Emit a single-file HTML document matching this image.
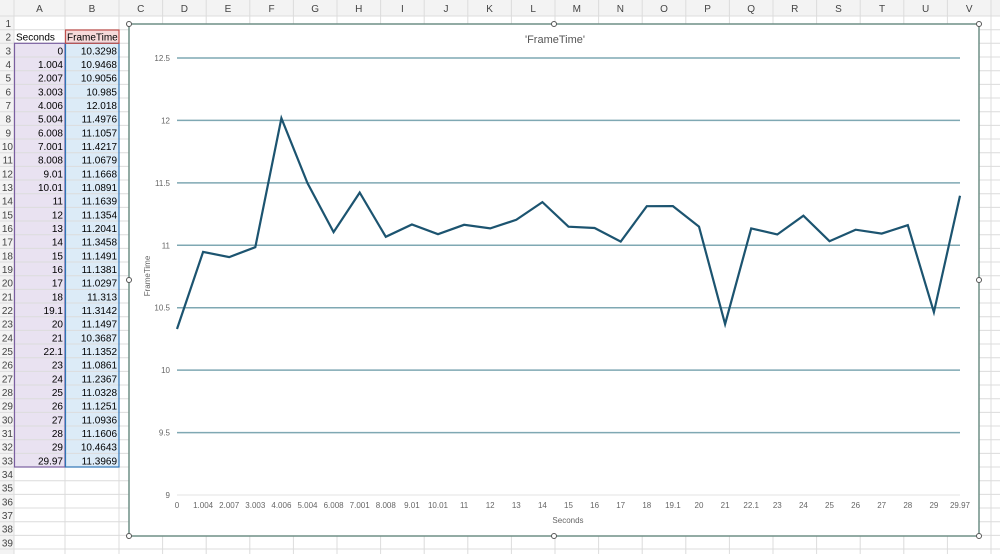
<!DOCTYPE html>
<html><head><meta charset="utf-8"><style>
body{margin:0;width:1000px;height:554px;overflow:hidden;background:#fff}
svg{display:block;font-family:"Liberation Sans",sans-serif}
</style></head><body>
<svg width="1000" height="554" viewBox="0 0 1000 554" xmlns="http://www.w3.org/2000/svg">
<rect width="1000" height="554" fill="#fff"/>
<!-- header bg -->
<rect x="0" y="0" width="1000" height="16" fill="#f3f3f3"/>
<rect x="0" y="0" width="14" height="554" fill="#f3f3f3"/>
<!-- selection fills -->
<rect x="14" y="43.3" width="51" height="423.8" fill="#e9e2f1"/>
<rect x="65" y="43.3" width="54" height="423.8" fill="#dcebf7"/>
<rect x="65" y="29.7" width="54" height="13.6" fill="#f6dada"/>
<g id="grid" stroke="#e1e1e1" stroke-width="1">
<script></script>
</g>
<g stroke="#e1e1e1" stroke-width="1" id="g2"></g>
<g stroke="#dcdcdc" stroke-width="1">
<line x1="14" y1="0" x2="14" y2="554"/><line x1="65" y1="0" x2="65" y2="554"/><line x1="119" y1="0" x2="119" y2="554"/>
<line x1="162.6" y1="0" x2="162.6" y2="554"/><line x1="206.2" y1="0" x2="206.2" y2="554"/><line x1="249.8" y1="0" x2="249.8" y2="554"/><line x1="293.4" y1="0" x2="293.4" y2="554"/><line x1="337" y1="0" x2="337" y2="554"/><line x1="380.6" y1="0" x2="380.6" y2="554"/><line x1="424.2" y1="0" x2="424.2" y2="554"/><line x1="467.8" y1="0" x2="467.8" y2="554"/><line x1="511.4" y1="0" x2="511.4" y2="554"/><line x1="555" y1="0" x2="555" y2="554"/><line x1="598.6" y1="0" x2="598.6" y2="554"/><line x1="642.2" y1="0" x2="642.2" y2="554"/><line x1="685.8" y1="0" x2="685.8" y2="554"/><line x1="729.4" y1="0" x2="729.4" y2="554"/><line x1="773" y1="0" x2="773" y2="554"/><line x1="816.6" y1="0" x2="816.6" y2="554"/><line x1="860.2" y1="0" x2="860.2" y2="554"/><line x1="903.8" y1="0" x2="903.8" y2="554"/><line x1="947.4" y1="0" x2="947.4" y2="554"/><line x1="991" y1="0" x2="991" y2="554"/>
<line x1="0" y1="16" x2="1000" y2="16"/><line x1="0" y1="29.7" x2="1000" y2="29.7"/><line x1="0" y1="43.3" x2="1000" y2="43.3"/><line x1="0" y1="57" x2="1000" y2="57"/><line x1="0" y1="70.7" x2="1000" y2="70.7"/><line x1="0" y1="84.4" x2="1000" y2="84.4"/><line x1="0" y1="98" x2="1000" y2="98"/><line x1="0" y1="111.7" x2="1000" y2="111.7"/><line x1="0" y1="125.4" x2="1000" y2="125.4"/><line x1="0" y1="139" x2="1000" y2="139"/><line x1="0" y1="152.7" x2="1000" y2="152.7"/><line x1="0" y1="166.4" x2="1000" y2="166.4"/><line x1="0" y1="180" x2="1000" y2="180"/><line x1="0" y1="193.7" x2="1000" y2="193.7"/><line x1="0" y1="207.4" x2="1000" y2="207.4"/><line x1="0" y1="221" x2="1000" y2="221"/><line x1="0" y1="234.7" x2="1000" y2="234.7"/><line x1="0" y1="248.4" x2="1000" y2="248.4"/><line x1="0" y1="262" x2="1000" y2="262"/><line x1="0" y1="275.7" x2="1000" y2="275.7"/><line x1="0" y1="289.4" x2="1000" y2="289.4"/><line x1="0" y1="303" x2="1000" y2="303"/><line x1="0" y1="316.7" x2="1000" y2="316.7"/><line x1="0" y1="330.4" x2="1000" y2="330.4"/><line x1="0" y1="344" x2="1000" y2="344"/><line x1="0" y1="357.7" x2="1000" y2="357.7"/><line x1="0" y1="371.4" x2="1000" y2="371.4"/><line x1="0" y1="385" x2="1000" y2="385"/><line x1="0" y1="398.7" x2="1000" y2="398.7"/><line x1="0" y1="412.4" x2="1000" y2="412.4"/><line x1="0" y1="426" x2="1000" y2="426"/><line x1="0" y1="439.7" x2="1000" y2="439.7"/><line x1="0" y1="453.4" x2="1000" y2="453.4"/><line x1="0" y1="467" x2="1000" y2="467"/><line x1="0" y1="480.7" x2="1000" y2="480.7"/><line x1="0" y1="494.4" x2="1000" y2="494.4"/><line x1="0" y1="508" x2="1000" y2="508"/><line x1="0" y1="521.7" x2="1000" y2="521.7"/><line x1="0" y1="535.4" x2="1000" y2="535.4"/><line x1="0" y1="549" x2="1000" y2="549"/>
</g>
<!-- column headers -->
<g font-size="10" fill="#444" text-anchor="middle">
<text x="39.5" y="12">A</text><text x="92" y="12">B</text><text x="140.8" y="12">C</text><text x="184.4" y="12">D</text><text x="228" y="12">E</text><text x="271.6" y="12">F</text><text x="315.2" y="12">G</text><text x="358.8" y="12">H</text><text x="402.4" y="12">I</text><text x="446" y="12">J</text><text x="489.6" y="12">K</text><text x="533.2" y="12">L</text><text x="576.8" y="12">M</text><text x="620.4" y="12">N</text><text x="664" y="12">O</text><text x="707.6" y="12">P</text><text x="751.2" y="12">Q</text><text x="794.8" y="12">R</text><text x="838.4" y="12">S</text><text x="882" y="12">T</text><text x="925.6" y="12">U</text><text x="969.2" y="12">V</text>
</g>
<!-- row numbers -->
<g font-size="10" fill="#444" text-anchor="end">
<text x="11" y="27">1</text><text x="11" y="40.7">2</text><text x="11" y="54.3">3</text><text x="11" y="68">4</text><text x="11" y="81.7">5</text><text x="11" y="95.4">6</text><text x="11" y="109">7</text><text x="11" y="122.7">8</text><text x="11" y="136.4">9</text><text x="13" y="150">10</text><text x="13" y="163.7">11</text><text x="13" y="177.4">12</text><text x="13" y="191">13</text><text x="13" y="204.7">14</text><text x="13" y="218.4">15</text><text x="13" y="232">16</text><text x="13" y="245.7">17</text><text x="13" y="259.4">18</text><text x="13" y="273">19</text><text x="13" y="286.7">20</text><text x="13" y="300.4">21</text><text x="13" y="314">22</text><text x="13" y="327.7">23</text><text x="13" y="341.4">24</text><text x="13" y="355">25</text><text x="13" y="368.7">26</text><text x="13" y="382.4">27</text><text x="13" y="396">28</text><text x="13" y="409.7">29</text><text x="13" y="423.4">30</text><text x="13" y="437">31</text><text x="13" y="450.7">32</text><text x="13" y="464.4">33</text><text x="13" y="478">34</text><text x="13" y="491.7">35</text><text x="13" y="505.4">36</text><text x="13" y="519">37</text><text x="13" y="532.7">38</text><text x="13" y="546.4">39</text>
</g>
<!-- selection borders -->
<rect x="14.5" y="43.3" width="50.5" height="423.7" fill="none" stroke="#7a5fa0" stroke-width="1.2"/>
<rect x="65.5" y="43.3" width="53.5" height="423.7" fill="none" stroke="#2e75b6" stroke-width="1.2"/>
<rect x="65.5" y="30" width="53.5" height="13.3" fill="none" stroke="#c0504d" stroke-width="1.2"/>
<g font-size="10" fill="#000">
<text x="16" y="40.7">Seconds</text><text x="67" y="40.7">FrameTime</text>
</g>
<g font-size="10" fill="#000" text-anchor="end">
<text x="63" y="54.3">0</text><text x="63" y="68">1.004</text><text x="63" y="81.7">2.007</text><text x="63" y="95.4">3.003</text><text x="63" y="109">4.006</text><text x="63" y="122.7">5.004</text><text x="63" y="136.4">6.008</text><text x="63" y="150">7.001</text><text x="63" y="163.7">8.008</text><text x="63" y="177.4">9.01</text><text x="63" y="191">10.01</text><text x="63" y="204.7">11</text><text x="63" y="218.4">12</text><text x="63" y="232">13</text><text x="63" y="245.7">14</text><text x="63" y="259.4">15</text><text x="63" y="273">16</text><text x="63" y="286.7">17</text><text x="63" y="300.4">18</text><text x="63" y="314">19.1</text><text x="63" y="327.7">20</text><text x="63" y="341.4">21</text><text x="63" y="355">22.1</text><text x="63" y="368.7">23</text><text x="63" y="382.4">24</text><text x="63" y="396">25</text><text x="63" y="409.7">26</text><text x="63" y="423.4">27</text><text x="63" y="437">28</text><text x="63" y="450.7">29</text><text x="63" y="464.4">29.97</text>
<text x="117" y="54.3">10.3298</text><text x="117" y="68">10.9468</text><text x="117" y="81.7">10.9056</text><text x="117" y="95.4">10.985</text><text x="117" y="109">12.018</text><text x="117" y="122.7">11.4976</text><text x="117" y="136.4">11.1057</text><text x="117" y="150">11.4217</text><text x="117" y="163.7">11.0679</text><text x="117" y="177.4">11.1668</text><text x="117" y="191">11.0891</text><text x="117" y="204.7">11.1639</text><text x="117" y="218.4">11.1354</text><text x="117" y="232">11.2041</text><text x="117" y="245.7">11.3458</text><text x="117" y="259.4">11.1491</text><text x="117" y="273">11.1381</text><text x="117" y="286.7">11.0297</text><text x="117" y="300.4">11.313</text><text x="117" y="314">11.3142</text><text x="117" y="327.7">11.1497</text><text x="117" y="341.4">10.3687</text><text x="117" y="355">11.1352</text><text x="117" y="368.7">11.0861</text><text x="117" y="382.4">11.2367</text><text x="117" y="396">11.0328</text><text x="117" y="409.7">11.1251</text><text x="117" y="423.4">11.0936</text><text x="117" y="437">11.1606</text><text x="117" y="450.7">10.4643</text><text x="117" y="464.4">11.3969</text>
</g>
<!-- chart -->
<rect x="129" y="24" width="850" height="512" fill="#fff" stroke="#6f8f86" stroke-width="1.5"/>
<g fill="#fff" stroke="#555" stroke-width="1">
<circle cx="129" cy="24" r="2.5"/><circle cx="554" cy="24" r="2.5"/><circle cx="979" cy="24" r="2.5"/><circle cx="129" cy="280" r="2.5"/><circle cx="979" cy="280" r="2.5"/><circle cx="129" cy="536" r="2.5"/><circle cx="554" cy="536" r="2.5"/><circle cx="979" cy="536" r="2.5"/>
</g>
<text x="555" y="43" font-size="11" fill="#555" text-anchor="middle">'FrameTime'</text>
<g stroke="#7fa8b3" stroke-width="1.5">
<line x1="177" y1="58" x2="960" y2="58"/><line x1="177" y1="120.4" x2="960" y2="120.4"/><line x1="177" y1="182.9" x2="960" y2="182.9"/><line x1="177" y1="245.3" x2="960" y2="245.3"/><line x1="177" y1="307.7" x2="960" y2="307.7"/><line x1="177" y1="370.1" x2="960" y2="370.1"/><line x1="177" y1="432.6" x2="960" y2="432.6"/>
</g>
<line x1="177" y1="495" x2="960" y2="495" stroke="#e3e3e3" stroke-width="1"/>
<g font-size="8" fill="#666" text-anchor="end">
<text x="170" y="61">12.5</text><text x="170" y="123.4">12</text><text x="170" y="185.9">11.5</text><text x="170" y="248.3">11</text><text x="170" y="310.7">10.5</text><text x="170" y="373.1">10</text><text x="170" y="435.6">9.5</text><text x="170" y="498">9</text>
</g>
<g font-size="8" fill="#666" text-anchor="middle">
<text x="177" y="508">0</text><text x="203.1" y="508">1.004</text><text x="229.2" y="508">2.007</text><text x="255.3" y="508">3.003</text><text x="281.4" y="508">4.006</text><text x="307.5" y="508">5.004</text><text x="333.6" y="508">6.008</text><text x="359.7" y="508">7.001</text><text x="385.8" y="508">8.008</text><text x="411.9" y="508">9.01</text><text x="438" y="508">10.01</text><text x="464.1" y="508">11</text><text x="490.2" y="508">12</text><text x="516.3" y="508">13</text><text x="542.4" y="508">14</text><text x="568.5" y="508">15</text><text x="594.6" y="508">16</text><text x="620.7" y="508">17</text><text x="646.8" y="508">18</text><text x="672.9" y="508">19.1</text><text x="699" y="508">20</text><text x="725.1" y="508">21</text><text x="751.2" y="508">22.1</text><text x="777.3" y="508">23</text><text x="803.4" y="508">24</text><text x="829.5" y="508">25</text><text x="855.6" y="508">26</text><text x="881.7" y="508">27</text><text x="907.8" y="508">28</text><text x="933.9" y="508">29</text><text x="960" y="508">29.97</text>
<text x="568" y="523">Seconds</text>
<text transform="translate(150 276) rotate(-90)">FrameTime</text>
</g>
<polyline fill="none" stroke="#1c5470" stroke-width="2.2" stroke-linejoin="miter" points="177,329 203.1,251.9 229.2,257.1 255.3,247.2 281.4,118.2 307.5,183.2 333.6,232.1 359.7,192.6 385.8,236.8 411.9,224.5 438,234.2 464.1,224.8 490.2,228.4 516.3,219.8 542.4,202.1 568.5,226.7 594.6,228 620.7,241.6 646.8,206.2 672.9,206.1 699,226.6 725.1,324.1 751.2,228.4 777.3,234.5 803.4,215.7 829.5,241.2 855.6,229.7 881.7,233.6 907.8,225.2 933.9,312.2 960,195.7"/>
</svg>
</body></html>
